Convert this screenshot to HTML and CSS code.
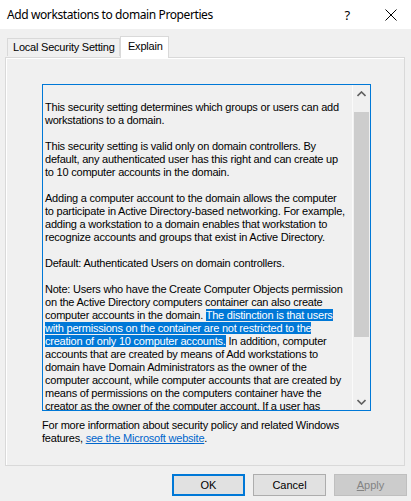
FILE: index.html
```html
<!DOCTYPE html>
<html lang="en">
<head>
    <meta charset="UTF-8">
    <title>Add workstations to domain Properties</title>
    <link rel="stylesheet" href="styles.css">
</head>
<body>

<div class="dialog">
    <div class="titlebar">
        <span class="title">Add workstations to domain Properties</span>
        <span class="help">?</span>
        <span class="close">
            <svg width="12" height="12" viewBox="0 0 12 12"><path d="M0.5 0.5 L11.5 11.5 M11.5 0.5 L0.5 11.5" stroke="#000" stroke-width="1" fill="none"/></svg>
        </span>
    </div>

    <div class="tabs">
        <div class="tab first">Local Security Setting</div>
        <div class="tab active">Explain</div>
    </div>

    <div class="panel">
        <div class="textbox">
            <div class="text">
                <p>This security setting determines which groups or users can add<br>workstations to a domain.</p>
                <p>This security setting is valid only on domain controllers. By<br>default, any authenticated user has this right and can create up<br>to 10 computer accounts in the domain.</p>
                <p>Adding a computer account to the domain allows the computer<br>to participate in Active Directory-based networking. For example,<br>adding a workstation to a domain enables that workstation to<br>recognize accounts and groups that exist in Active Directory.</p>
                <p>Default: Authenticated Users on domain controllers.</p>
                <p>Note: Users who have the Create Computer Objects permission<br>on the Active Directory computers container can also create<br>computer accounts in the domain. <span class="sel">The distinction is that users <br>with permissions on the container are not restricted to the <br>creation of only 10 computer accounts.</span> In addition, computer<br>accounts that are created by means of Add workstations to<br>domain have Domain Administrators as the owner of the<br>computer account, while computer accounts that are created by<br>means of permissions on the computers container have the<br>creator as the owner of the computer account. If a user has</p>
            </div>
            <div class="scrollbar">
                <div class="arrow">
                    <svg width="9" height="6" viewBox="0 0 9 6"><path d="M0.5 5 L4.5 1 L8.5 5" stroke="#606060" stroke-width="1.6" fill="none"/></svg>
                </div>
                <div class="track"><div class="thumb"></div></div>
                <div class="arrow">
                    <svg width="9" height="6" viewBox="0 0 9 6"><path d="M0.5 1 L4.5 5 L8.5 1" stroke="#606060" stroke-width="1.6" fill="none"/></svg>
                </div>
            </div>
        </div>
        <p class="more">For more information about security policy and related Windows<br>features, <a href="#">see the Microsoft website</a>.</p>
    </div>

    <div class="buttons">
        <button class="default">OK</button>
        <button>Cancel</button>
        <button disabled><u>A</u>pply</button>
    </div>
</div>

</body>
</html>
```

FILE: styles.css
```css
body {
    margin: 0;
    background-color: #f0f0f0;
    font-family: "Liberation Sans", Arial, sans-serif;
    font-size: 11px;
    letter-spacing: -0.22px;
    color: #000;
}
.dialog {
    width: 411px;
    height: 501px;
    overflow: hidden;
}
.titlebar {
    height: 29px;
    background-color: #fff;
    display: flex;
    align-items: center;
    font-family: "Noto Sans", sans-serif;
    font-size: 12px;
    letter-spacing: -0.4px;
}
.title {
    flex: 1;
    padding-left: 7px;
}
.help {
    width: 16px;
    margin-right: 30px;
    text-align: center;
    font-size: 13px;
}
.close {
    display: flex;
    width: 12px;
    margin-right: 14px;
}
.tabs {
    display: flex;
    align-items: flex-end;
    height: 28px;
    padding-left: 7px;
}
.tab {
    box-sizing: border-box;
    height: 18px;
    line-height: 17px;
    border: 1px solid #d9d9d9;
    border-bottom: none;
    background-color: #f0f0f0;
    margin-bottom: 1px;
}
.tab.first {
    width: 113px;
    padding-left: 5px;
}
.tab.active {
    width: 49px;
    height: 22px;
    line-height: 18px;
    padding-left: 7px;
    background-color: #fff;
    margin-bottom: -1px;
    position: relative;
}
.panel {
    margin-left: 5px;
    border: 1px solid #d9d9d9;
    box-shadow: inset 1px 1px 0 #fff;
    padding: 26px 0 0 36px;
    width: 362px;
    height: 381px;
}
.textbox {
    display: flex;
    width: 327px;
    height: 325px;
    border: 1px solid #0078d7;
    overflow: hidden;
}
.text {
    flex: 1;
    padding: 16px 0 0 2px;
    line-height: 13px;
    white-space: nowrap;
    overflow: hidden;
}
.text p {
    margin: 0 0 13px 0;
}
.sel {
    background-color: #0078d7;
    color: #fff;
}
.scrollbar {
    width: 17px;
    display: flex;
    flex-direction: column;
    border-left: 1px solid #fafafa;
    background-color: #f0f0f0;
}
.arrow {
    height: 17px;
    display: flex;
    align-items: center;
    justify-content: center;
}
.track {
    flex: 1;
    padding: 10px 1px 56px 1px;
}
.thumb {
    height: 100%;
    background-color: #cdcdcd;
}
.more {
    margin: 8px 0 0 0;
    line-height: 13px;
}
.more a {
    color: #0066cc;
}
.buttons {
    display: flex;
    justify-content: flex-end;
    gap: 8px;
    padding: 8px 4px 0 0;
}
button {
    width: 73px;
    height: 22px;
    font-family: "Liberation Sans", Arial, sans-serif;
    font-size: 11px;
    color: #000;
    background-color: #e1e1e1;
    border: 1px solid #adadad;
    padding: 0;
}
button.default {
    border: 2px solid #0078d7;
}
button:disabled {
    background-color: #cccccc;
    border-color: #bfbfbf;
    color: #838383;
}
```
